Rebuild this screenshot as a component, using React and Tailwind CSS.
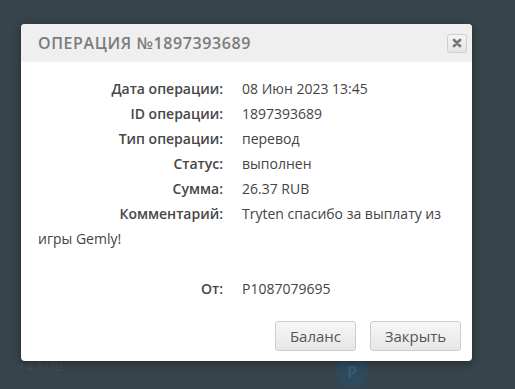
const rows = [
  { label: "Дата операции:", value: "08 Июн 2023 13:45" },
  { label: "ID операции:", value: "1897393689" },
  { label: "Тип операции:", value: "перевод" },
  { label: "Статус:", value: "выполнен" },
  { label: "Сумма:", value: "26.37 RUB" },
];

const Row = ({ label, children }) => (
  <div>
    <span className="inline-block w-[185px] text-right font-semibold text-[#474747]">{label}</span>
    <span className="ml-[19px] text-[#444]">{children}</span>
  </div>
);

export default function App() {
  return (
    <div
      className="relative w-[515px] h-[389px] overflow-hidden bg-[#37444b]"
      style={{ fontFamily: '"Open Sans", "Noto Sans", sans-serif' }}
    >
      {/* faint page content behind the overlay */}
      <div className="absolute left-[18px] top-[357px] text-[13px] font-semibold text-[#3f4c53]">+4 RUB</div>
      <div className="absolute left-[336px] top-[356px] w-[32px] h-[32px] rounded-full bg-[#2f4a5c] flex items-center justify-center text-[#3c5a6e] font-bold text-[16px]">P</div>

      <div className="relative ml-[21px] mt-[24px] w-[451px] rounded-[4px] overflow-hidden bg-white shadow-[0_2px_8px_rgba(0,0,0,0.35)]">
        {/* header */}
        <div className="flex items-center justify-between h-[38px] bg-[#efefef] pl-[17px] pr-[5px]">
          <h2 className="text-[16px] font-semibold tracking-[0.6px] text-[#7b7b7b]">ОПЕРАЦИЯ №1897393689</h2>
          <button className="flex items-center justify-center w-[20px] h-[19px] rounded-[3px] border border-[#cfcfcf] bg-gradient-to-b from-[#f6f6f6] to-[#e4e4e4]">
            <svg width="10" height="10" viewBox="0 0 10 10">
              <path d="M2 2 L8 8 M8 2 L2 8" stroke="#777" strokeWidth="2.8" strokeLinecap="round" />
            </svg>
          </button>
        </div>

        {/* body */}
        <div className="px-[17px] pt-[14px] pb-[10px] text-[14px] leading-[25px]">
          {rows.map((r) => (
            <Row key={r.label} label={r.label}>{r.value}</Row>
          ))}
          <div>
            <span className="inline-block w-[185px] text-right font-semibold text-[#474747]">Комментарий:</span>
            <span className="ml-[19px] text-[#444]">
              Tryten спасибо за выплату из
              <br />
              игры Gemly!
            </span>
          </div>
          <div className="h-[25px]" />
          <Row label="От:">P1087079695</Row>

          <div className="flex justify-end gap-[14px] mt-[20px] mr-[-6px]">
            <button className="w-[81px] h-[30px] rounded-[3px] border border-[#cccccc] bg-gradient-to-b from-[#f7f7f7] to-[#e6e6e6] text-[15px] text-[#555]">
              Баланс
            </button>
            <button className="w-[91px] h-[30px] rounded-[3px] border border-[#cccccc] bg-gradient-to-b from-[#f7f7f7] to-[#e6e6e6] text-[15px] text-[#555]">
              Закрыть
            </button>
          </div>
        </div>
      </div>
    </div>
  );
}
